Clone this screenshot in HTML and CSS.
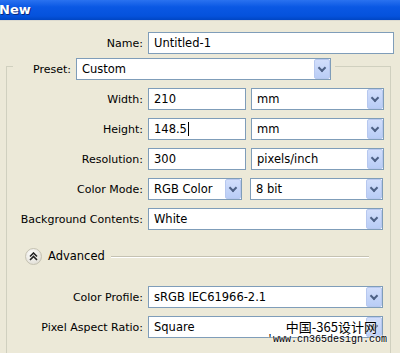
FILE: index.html
```html
<!DOCTYPE html>
<html lang="en">
<head>
<meta charset="UTF-8" />
<title>New</title>
<link rel="stylesheet" href="styles.css">
</head>
<body>
<div class="titlebar">New</div>

<div class="dialog">
  <div class="row name-row">
    <label class="lbl">Name:</label>
    <div class="field name-field">Untitled-1</div>
  </div>

  <div class="group">
    <div class="preset-row">
      <label class="lbl preset-lbl">Preset:</label>
      <div class="select preset-select"><span>Custom</span><i class="arrow"></i></div>
    </div>

    <div class="row">
      <label class="lbl">Width:</label>
      <div class="field num">210</div>
      <div class="select unit"><span>mm</span><i class="arrow"></i></div>
    </div>
    <div class="row">
      <label class="lbl">Height:</label>
      <div class="field num">148.5<b class="caret"></b></div>
      <div class="select unit"><span>mm</span><i class="arrow"></i></div>
    </div>
    <div class="row">
      <label class="lbl">Resolution:</label>
      <div class="field num">300</div>
      <div class="select unit"><span>pixels/inch</span><i class="arrow"></i></div>
    </div>
    <div class="row">
      <label class="lbl">Color Mode:</label>
      <div class="select mode"><span>RGB Color</span><i class="arrow"></i></div>
      <div class="select unit"><span>8 bit</span><i class="arrow"></i></div>
    </div>
    <div class="row">
      <label class="lbl">Background Contents:</label>
      <div class="select wide"><span>White</span><i class="arrow"></i></div>
    </div>

    <div class="advanced">
      <span class="adv-btn">
        <svg width="9" height="9" viewBox="0 0 9 9"><path d="M1 4.5 L4.5 1 L8 4.5 M1 8 L4.5 4.5 L8 8" fill="none" stroke="#222" stroke-width="1.6"/></svg>
      </span>
      <span class="adv-text">Advanced</span>
      <span class="adv-line"></span>
    </div>

    <div class="row">
      <label class="lbl">Color Profile:</label>
      <div class="select wide"><span>sRGB IEC61966-2.1</span><i class="arrow"></i></div>
    </div>
    <div class="row">
      <label class="lbl">Pixel Aspect Ratio:</label>
      <div class="select wide"><span>Square</span><i class="arrow"></i></div>
    </div>
  </div>
</div>

<div class="watermark">
  <div class="wm-cn">中国-365设计网</div>
  <div class="wm-url">'www.cn365design.com</div>
</div>
</body>
</html>
```

FILE: styles.css
```css
body {
  margin: 0;
  background: #ece9d8;
  font-family: "DejaVu Sans", Verdana, sans-serif;
  font-size: 11px;
  color: #000;
  width: 400px;
  height: 353px;
  overflow: hidden;
  position: relative;
}
.titlebar {
  height: 20px;
  line-height: 19px;
  background: linear-gradient(#2a72f0, #0a58e4 35%, #0552dc 80%, #0046c4);
  color: #fff;
  font-weight: bold;
  font-size: 13px;
  margin-left: -1px;
  text-shadow: 1px 1px 0 #0a2a80;
  border-bottom: 1px solid #dcdad0;
}
.dialog {
  padding-top: 11px;
}
.row {
  display: flex;
  align-items: center;
  gap: 5px;
  height: 22px;
  margin-top: 8px;
}
.name-row {
  margin-top: 0;
}
.lbl {
  width: 143px;
  text-align: right;
  flex: none;
}
.group .lbl {
  width: 136px;
}
.field, .select {
  box-sizing: border-box;
  height: 22px;
  border: 1px solid #7f9db9;
  background: #fff;
  display: flex;
  align-items: center;
  padding-left: 5px;
  font-size: 11.5px;
}
.name-field {
  width: 246px;
}
.group {
  margin: 12px 9px 0 6px;
  border: 1px solid #d0d0bf;
  border-bottom: none;
  height: 300px;
}
.preset-row {
  display: flex;
  align-items: center;
  width: fit-content;
  margin: -9px 0 4px 6px;
  padding: 0 4px 0 0;
  background: #ece9d8;
  gap: 5px;
}
.group .preset-lbl {
  width: 58px;
}
.preset-select {
  width: 255px;
}
.num {
  width: 98px;
}
.unit {
  width: 133px;
}
.mode {
  width: 94px;
  margin-right: 3px;
}
.wide {
  width: 235px;
}
.select span {
  flex: 1;
}
.arrow {
  flex: none;
  width: 16px;
  height: 20px;
  box-sizing: border-box;
  background: linear-gradient(#d2defb, #b9cdf6);
  border: 1px solid #b7c8ef;
  border-radius: 2px;
  position: relative;
}
.arrow::after {
  content: "";
  position: absolute;
  left: 4px;
  top: 5px;
  width: 4px;
  height: 4px;
  border-right: 2px solid #4d6185;
  border-bottom: 2px solid #4d6185;
  transform: rotate(45deg);
}
.caret {
  display: inline-block;
  width: 1px;
  height: 14px;
  background: #000;
  margin-left: 1px;
}
.advanced {
  display: flex;
  align-items: center;
  height: 22px;
  margin: 15px 0 19px 18px;
  gap: 6px;
}
.adv-btn {
  width: 15px;
  height: 15px;
  border-radius: 50%;
  background: radial-gradient(circle at 40% 35%, #ffffff, #e4e2da 70%, #c9c7bc);
  border: 1px solid #c5c2b2;
  display: flex;
  align-items: center;
  justify-content: center;
}
.adv-text {
  font-size: 11.5px;
}
.adv-line {
  width: 258px;
  height: 1px;
  background: #c5c2b2;
  border-bottom: 1px solid #fff;
  margin-top: 2px;
}
.watermark {
  position: absolute;
  right: 14px;
  top: 319px;
  text-align: right;
  text-shadow: 0 0 2px #fff, 0 0 2px #fff;
}
.wm-cn {
  font-family: "Noto Sans CJK SC", sans-serif;
  font-size: 13px;
  line-height: 15px;
  margin-right: 9px;
}
.wm-url {
  font-family: "Liberation Mono", monospace;
  font-size: 10px;
  line-height: 12px;
  margin-right: -1px;
}
```
